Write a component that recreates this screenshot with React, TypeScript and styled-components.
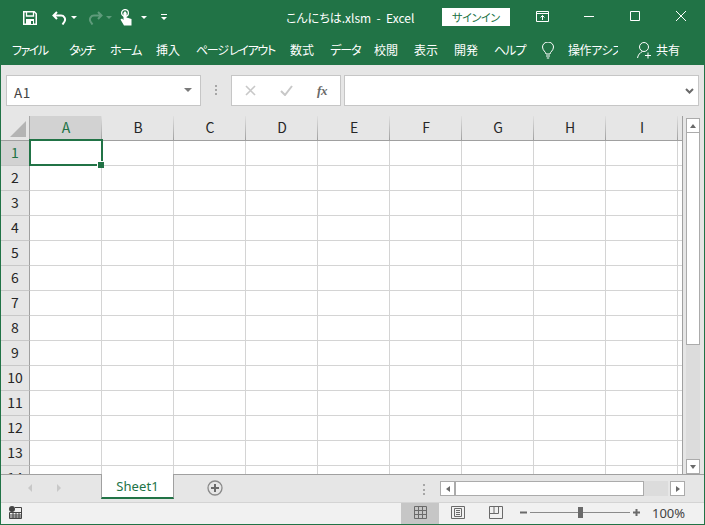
import React from "react";
import styled, { createGlobalStyle } from "styled-components";

const GREEN = "#217346";
const UI = `"Noto Sans CJK JP", "Noto Sans", sans-serif`;

const Global = createGlobalStyle`
  html, body { margin: 0; padding: 0; width: 705px; height: 525px; overflow: hidden; background: #e6e6e6; }
  * { box-sizing: border-box; }
`;

const Window = styled.div`
  width: 705px;
  height: 525px;
  display: flex;
  flex-direction: column;
  background: #e6e6e6;
  border: solid ${GREEN};
  border-width: 0 1px 1px 1px;
  font-family: ${UI};
  overflow: hidden;
`;

const TitleBar = styled.header`
  height: 35px;
  flex: none;
  margin: 0 -1px;
  background: ${GREEN};
  display: flex;
  align-items: center;
  color: #fff;
`;
const Quick = styled.div`
  display: flex;
  align-items: center;
  padding-left: 23px;
`;
const QuickIcon = styled.svg<{ $after: number }>`
  display: block;
  flex: none;
  margin-right: ${p => p.$after}px;
`;
const TitleText = styled.div`
  margin-left: 119px;
  width: 156px;
  font-size: 12px;
  font-feature-settings: "palt";
  white-space: pre;
  color: #fff;
  line-height: 35px;
`;
const SignIn = styled.button`
  width: 68px;
  height: 18px;
  margin: 0 0 1px 0;
  padding: 0;
  border: 0;
  background: #fff;
  color: ${GREEN};
  font-family: ${UI};
  font-size: 11px;
  line-height: 18px;
  font-feature-settings: "palt";
  letter-spacing: -0.3px;
`;
const WinControls = styled.div`
  display: flex;
  align-items: center;
  margin-left: 26px;
`;
const WinIcon = styled.svg<{ $after: number }>`
  display: block;
  flex: none;
  margin-right: ${p => p.$after}px;
  margin-bottom: 3px;
`;

const Ribbon = styled.nav`
  height: 30px;
  flex: none;
  margin: 0 -1px;
  background: ${GREEN};
  display: flex;
  align-items: center;
  padding: 0 0 0 12px;
  color: #fff;
`;
const Tab = styled.span<{ $w: number; $ls?: number; $after?: number }>`
  flex: none;
  width: ${p => p.$w}px;
  margin-right: ${p => p.$after ?? 0}px;
  font-size: 12px;
  line-height: 30px;
  font-feature-settings: "palt";
  letter-spacing: ${p => p.$ls ?? 0}px;
  white-space: nowrap;
  overflow: hidden;
  color: #fff;
`;
const TabIcon = styled.svg<{ $after: number }>`
  display: block;
  flex: none;
  margin-right: ${p => p.$after}px;
`;

const FormulaBar = styled.div`
  height: 51px;
  flex: none;
  display: flex;
  padding: 10px 5px 10px 5px;
  align-items: stretch;
`;
const NameBox = styled.div`
  width: 195px;
  flex: none;
  background: #fff;
  border: 1px solid #c6c6c6;
  display: flex;
  align-items: center;
  justify-content: space-between;
  padding: 3px 8px 0 7px;
  font-size: 13.500px;
  color: #444;
  letter-spacing: 0.5px;
`;
const Caret = styled.i`
  display: block;
  width: 0;
  height: 0;
  border: 4px solid transparent;
  border-top: 4px solid #7a7a7a;
  border-bottom: 0;
  margin-top: -4px;
`;
const Grip = styled.div`
  width: 30px;
  flex: none;
  display: flex;
  flex-direction: column;
  align-items: center;
  justify-content: center;
  gap: 2px;
  padding-bottom: 1px;
`;
const GripDot = styled.i`
  display: block;
  width: 2px;
  height: 2px;
  background: #a6a6a6;
`;
const FxBox = styled.div`
  width: 110px;
  flex: none;
  background: #fff;
  border: 1px solid #c6c6c6;
  display: flex;
  align-items: center;
  padding-left: 13px;
`;
const FxIcon = styled.svg<{ $after: number }>`
  display: block;
  flex: none;
  margin-right: ${p => p.$after}px;
`;
const FxLabel = styled.span`
  font-family: "Liberation Serif", serif;
  font-style: italic;
  font-weight: bold;
  font-size: 13px;
  color: #6a6a6a;
  letter-spacing: -0.3px;
`;
const FormulaInput = styled.div`
  width: 355px;
  flex: none;
  margin-left: 3px;
  background: #fff;
  border: 1px solid #c6c6c6;
  display: flex;
  align-items: center;
  justify-content: flex-end;
  padding-right: 4px;
`;

const SheetArea = styled.div`
  height: 358px;
  flex: none;
  display: flex;
  position: relative;
`;
const Grid = styled.div`
  width: 682px;
  flex: none;
  height: 358px;
  overflow: hidden;
  position: relative;
  display: grid;
  grid-template-columns: 29px repeat(9, 72px) 4px;
  grid-auto-rows: 25px;
  align-content: start;
  border-right: 1px solid #a0a0a0;
`;
const Corner = styled.div`
  background: #e6e6e6;
  border-right: 1px solid #a8a8a8;
  border-bottom: 1px solid #a0a0a0;
  position: relative;
  &::after {
    content: "";
    position: absolute;
    right: 3px;
    bottom: 3px;
    border-style: solid;
    border-width: 0 0 16px 16px;
    border-color: transparent transparent #b4b4b4 transparent;
  }
`;
const ColHead = styled.div<{ $on?: boolean }>`
  background: ${p => (p.$on ? "#d2d2d2" : "#e6e6e6")};
  color: ${p => (p.$on ? GREEN : "#262626")};
  border-bottom: 1px solid #a0a0a0;
  font-size: 14px;
  line-height: 23px;
  text-align: center;
  position: relative;
  &::after {
    content: "";
    position: absolute;
    top: 0;
    right: 0;
    bottom: 0;
    width: 1px;
    background: linear-gradient(to bottom, #e0e0e0, #a0a0a0);
  }
`;
const RowHead = styled.div<{ $on?: boolean }>`
  background: ${p => (p.$on ? "#d2d2d2" : "#e6e6e6")};
  color: ${p => (p.$on ? GREEN : "#262626")};
  border-right: 1px solid #a0a0a0;
  border-bottom: 1px solid #c8c8c8;
  font-size: 14px;
  line-height: 22px;
  text-align: center;
`;
const Cell = styled.div`
  background: #fff;
  border-right: 1px solid #d4d4d4;
  border-bottom: 1px solid #d4d4d4;
`;
const Tail = styled.div`
  background: #fff;
  border-bottom: 1px solid #d4d4d4;
`;
const TailHead = styled.div`
  background: #e6e6e6;
  border-bottom: 1px solid #a0a0a0;
`;
const Selection = styled.div`
  position: absolute;
  left: 28px;
  top: 23px;
  width: 74px;
  height: 27px;
  border: 2px solid ${GREEN};
  &::after {
    content: "";
    position: absolute;
    right: -3px;
    bottom: -4px;
    width: 6px;
    height: 6px;
    background: ${GREEN};
    border: 1px solid #fff;
    border-width: 1px 0 0 1px;
  }
`;
const VScroll = styled.div`
  position: absolute;
  left: 685px;
  top: 2px;
  width: 14px;
  height: 356px;
  display: flex;
  flex-direction: column;
  background: #dcdcdc;
`;
const ScrollButton = styled.div<{ $dir: "up" | "down" | "left" | "right" }>`
  flex: none;
  ${p => (p.$dir === "up" || p.$dir === "down" ? "height: 15px; width: 14px;" : "width: 15px; height: 15px;")}
  background: #fff;
  border: 1px solid #ababab;
  display: flex;
  align-items: center;
  justify-content: center;
  &::before {
    content: "";
    width: 0;
    height: 0;
    border: 3px solid transparent;
    ${p =>
      p.$dir === "up"
        ? "border-bottom: 4px solid #6a6a6a; border-top: 0;"
        : p.$dir === "down"
        ? "border-top: 4px solid #6a6a6a; border-bottom: 0;"
        : p.$dir === "left"
        ? "border-right: 4px solid #6a6a6a; border-left: 0;"
        : "border-left: 4px solid #6a6a6a; border-right: 0;"}
  }
`;
const VThumb = styled.div`
  height: 212px;
  flex: none;
  background: #fff;
  border: 1px solid #ababab;
  border-top: 0;
`;
const VTrack = styled.div`
  flex: 1;
`;

const TabBar = styled.div`
  height: 28px;
  flex: none;
  border-top: 1px solid #a0a0a0;
  display: flex;
`;
const NavArrow = styled.i<{ $dir: "l" | "r"; $left: number; $right: number }>`
  display: block;
  flex: none;
  width: 0;
  height: 0;
  margin: 9px ${p => p.$right}px 0 ${p => p.$left}px;
  align-self: flex-start;
  border: 4px solid transparent;
  ${p => (p.$dir === "l" ? "border-right: 4px solid #c8c8c8; border-left: 0;" : "border-left: 4px solid #c8c8c8; border-right: 0;")}
`;
const SheetTab = styled.div`
  width: 73px;
  height: 25px;
  margin: -1px 0 0 0;
  flex: none;
  background: #fff;
  border: solid #a0a0a0;
  border-width: 0 1px 0 1px;
  border-bottom: 2px solid ${GREEN};
  color: ${GREEN};
  font-family: "Noto Sans", sans-serif;
  font-size: 13px;
  letter-spacing: 0.1px;
  line-height: 25px;
  text-align: center;
`;
const AddIcon = styled.svg`
  display: block;
  flex: none;
  margin: 5px 0 0 33px;
`;
const HGrip = styled.div`
  margin: 9px 0 0 196px;
  flex: none;
  width: 10px;
  height: 11px;
  display: flex;
  flex-direction: column;
  align-items: center;
  justify-content: space-between;
`;
const HScroll = styled.div`
  flex: none;
  margin: 6px 0 0 11px;
  width: 245px;
  height: 15px;
  display: flex;
`;
const HThumb = styled.div`
  width: 189px;
  flex: none;
  background: #fff;
  border: 1px solid #ababab;
`;
const HTrack = styled.div`
  width: 24px;
  flex: none;
  background: #dcdcdc;
  margin-right: 2px;
`;

const StatusBar = styled.footer`
  height: 22px;
  flex: none;
  background: #f1f1f1;
  border-top: 1px solid #d4d4d4;
  display: flex;
  align-items: center;
  padding-left: 8px;
  color: #444;
`;
const StatusIcon = styled.svg<{ $lift?: boolean }>`
  display: block;
  flex: none;
  margin-bottom: ${p => (p.$lift ? 2 : 0)}px;
`;
const ViewButtons = styled.div`
  display: flex;
  margin-left: 379px;
  height: 21px;
`;
const ViewButton = styled.div<{ $on?: boolean }>`
  width: 38px;
  height: 21px;
  padding-bottom: 2px;
  display: flex;
  align-items: center;
  justify-content: center;
  background: ${p => (p.$on ? "#c6c6c6" : "transparent")};
`;
const Zoom = styled.div`
  display: flex;
  align-items: center;
  margin: 0 0 2px 5px;
`;
const ZoomGlyph = styled.svg`
  display: block;
  flex: none;
`;
const Slider = styled.div`
  width: 100px;
  height: 1px;
  background: #8a8a8a;
  margin: 0 3px;
  position: relative;
`;
const SliderThumb = styled.i`
  position: absolute;
  left: 48px;
  top: -5px;
  width: 5px;
  height: 11px;
  background: #6a6a6a;
`;
const Percent = styled.span`
  margin-left: 12px;
  font-family: "Noto Sans", sans-serif;
  font-size: 13px;
  line-height: 20px;
  color: #444;
`;

const tabs: [string, number, number][] = [
  ["ファイル", 57, -1.5],
  ["タッチ", 41, -2],
  ["ホーム", 46, -1],
  ["挿入", 40, 0],
  ["ページ レイアウト", 94, -1.300],
  ["数式", 40, 0],
  ["データ", 44, -1],
  ["校閲", 40, 0],
  ["表示", 40, 0],
  ["開発", 40, 0],
  ["ヘルプ", 48, -1],
];
const cols = ["A", "B", "C", "D", "E", "F", "G", "H", "I"];
const rows = Array.from({ length: 14 }, (_, i) => i + 1);

export default function App() {
  return (
    <Window>
      <Global />
      <TitleBar>
        <Quick>
          <QuickIcon $after={15} width="14" height="14" viewBox="0 0 14 14">
            <path d="M.75.750h10.500l2 2v10.500H.75z" fill="none" stroke="#fff" strokeWidth="1.500" />
            <path d="M3.500 1v4h7V1" fill="none" stroke="#fff" strokeWidth="1.300" />
            <path d="M3 8h8v6H3z" fill="#fff" />
            <path d="M8 10h2v3H8z" fill={GREEN} />
          </QuickIcon>
          <QuickIcon $after={4} width="15" height="14" viewBox="0 0 15 14">
            <path d="M5 1 1.500 4.500 5 8M2 4.500h7a4 4 0 0 1 3.500 6l-2 3" fill="none" stroke="#fff" strokeWidth="2" />
          </QuickIcon>
          <QuickIcon $after={11} width="6" height="4" viewBox="0 0 6 4">
            <path d="M0 0h6L3 3z" fill="#fff" />
          </QuickIcon>
          <QuickIcon $after={3} width="15" height="14" viewBox="0 0 15 14">
            <path d="M10 1l3.500 3.500L10 8M13 4.500H6a4 4 0 0 0-3.500 6l2 3" fill="none" stroke="#5f9b7b" strokeWidth="2" />
          </QuickIcon>
          <QuickIcon $after={8} width="6" height="4" viewBox="0 0 6 4">
            <path d="M0 0h6L3 3z" fill="#5f9b7b" />
          </QuickIcon>
          <QuickIcon $after={9} width="12" height="17" viewBox="0 0 12 17">
            <path d="M3.500 4V11L2 9.500 0.500 10.500 4 16.500h7.500V10L6.500 8.500V4z" fill="#fff" />
            <circle cx="5" cy="4" r="3.400" fill="none" stroke="#fff" strokeWidth="1.300" />
            <rect x="3.700" y="2.500" width="2.600" height="6" rx="1.300" fill="#fff" />
          </QuickIcon>
          <QuickIcon $after={14} width="6" height="4" viewBox="0 0 6 4">
            <path d="M0 0h6L3 3z" fill="#fff" />
          </QuickIcon>
          <QuickIcon $after={0} width="6" height="7" viewBox="0 0 6 7">
            <path d="M0 0h6v1H0zM0 3h6L3 6z" fill="#fff" />
          </QuickIcon>
        </Quick>
        <TitleText>こんにちは.xlsm  -  Excel</TitleText>
        <SignIn>サインイン</SignIn>
        <WinControls>
          <WinIcon $after={35} width="13" height="11" viewBox="0 0 13 11">
            <path d="M.5.500h12v10H.5zM1 2.500h11M6.500 9V4.500M4.500 6.500l2-2 2 2" fill="none" stroke="#fff" />
          </WinIcon>
          <WinIcon $after={36} width="10" height="11" viewBox="0 0 10 11">
            <path d="M0 5.500h10" stroke="#fff" fill="none" />
          </WinIcon>
          <WinIcon $after={36} width="10" height="10" viewBox="0 0 10 10">
            <path d="M.5.500h9v9h-9z" stroke="#fff" fill="none" />
          </WinIcon>
          <WinIcon $after={0} width="10" height="10" viewBox="0 0 10 10">
            <path d="M0 0l10 10M10 0L0 10" stroke="#fff" fill="none" />
          </WinIcon>
        </WinControls>
      </TitleBar>
      <Ribbon>
        {tabs.map(([t, w, ls]) => (
          <Tab key={t} $w={w} $ls={ls}>{t}</Tab>
        ))}
        <TabIcon $after={14} width="12" height="17" viewBox="0 0 12 17">
          <path d="M4 12c0-2-3.500-3.500-3.500-7a5.500 5 0 0 1 11 0c0 3.500-3.500 5-3.500 7zM4 14h4M4.800 16h2.400" fill="none" stroke="#fff" />
        </TabIcon>
        <Tab $w={50} $after={19} $ls={-0.400}>操作アシス</Tab>
        <TabIcon $after={4} width="15" height="17" viewBox="0 0 15 17">
          <circle cx="7" cy="5" r="4.500" fill="none" stroke="#fff" />
          <path d="M.5 16c.5-3 2.500-5.500 5-6.500M11 10.500v6M8 13.500h6" fill="none" stroke="#fff" />
        </TabIcon>
        <Tab $w={24}>共有</Tab>
      </Ribbon>
      <FormulaBar>
        <NameBox>A1<Caret /></NameBox>
        <Grip><GripDot /><GripDot /><GripDot /></Grip>
        <FxBox>
          <FxIcon $after={24} width="11" height="11" viewBox="0 0 11 11">
            <path d="M1 1l9 9M10 1l-9 9" stroke="#c8c8c8" strokeWidth="1.600" fill="none" />
          </FxIcon>
          <FxIcon $after={24} width="13" height="11" viewBox="0 0 13 11">
            <path d="M1 6l4 4 7-9" stroke="#c8c8c8" strokeWidth="2" fill="none" />
          </FxIcon>
          <FxLabel>fx</FxLabel>
        </FxBox>
        <FormulaInput>
          <FxIcon $after={0} width="9" height="6" viewBox="0 0 9 6">
            <path d="M1 1l3.500 3.500L8 1" stroke="#6a6a6a" strokeWidth="2" fill="none" />
          </FxIcon>
        </FormulaInput>
      </FormulaBar>
      <SheetArea>
        <Grid>
          <Corner />
          {cols.map((c, i) => (
            <ColHead key={c} $on={i === 0}>{c}</ColHead>
          ))}
          <TailHead />
          {rows.map(r => (
            <React.Fragment key={r}>
              <RowHead $on={r === 1}>{r}</RowHead>
              {cols.map(c => (
                <Cell key={c} />
              ))}
              <Tail />
            </React.Fragment>
          ))}
          <Selection />
        </Grid>
        <VScroll>
          <ScrollButton $dir="up" />
          <VThumb />
          <VTrack />
          <ScrollButton $dir="down" />
        </VScroll>
      </SheetArea>
      <TabBar>
        <NavArrow $dir="l" $left={27} $right={25} />
        <NavArrow $dir="r" $left={0} $right={40} />
        <SheetTab>Sheet1</SheetTab>
        <AddIcon width="16" height="16" viewBox="0 0 16 16">
          <circle cx="8" cy="8" r="7" fill="none" stroke="#8a8a8a" strokeWidth="1.300" />
          <path d="M8 4v8M4 8h8" stroke="#6a6a6a" strokeWidth="2" fill="none" />
        </AddIcon>
        <HGrip><GripDot /><GripDot /><GripDot /></HGrip>
        <HScroll>
          <ScrollButton $dir="left" />
          <HThumb />
          <HTrack />
          <ScrollButton $dir="right" />
        </HScroll>
      </TabBar>
      <StatusBar>
        <StatusIcon $lift width="13" height="13" viewBox="0 0 13 13">
          <circle cx="3" cy="3" r="3" fill="#444" />
          <path d="M6 1.500h6.500V12.500H.5V6.500h12M.5 9h12M.5 11h12M4 6.500V13M7 6.500V13M10 6.500V13" fill="none" stroke="#444" />
        </StatusIcon>
        <ViewButtons>
          <ViewButton $on>
            <StatusIcon width="13" height="13" viewBox="0 0 13 13">
              <path d="M.5.500h12v12H.5zM4.500.500v12M8.500.500v12M.5 4.500h12M.5 8.500h12" fill="none" stroke="#6a6a6a" />
            </StatusIcon>
          </ViewButton>
          <ViewButton>
            <StatusIcon width="14" height="13" viewBox="0 0 14 13">
              <path d="M.5.500h13v12H.5zM3.500 2.500h7v8h-7zM5 4.500h4M5 6.500h4M5 8.500h4" fill="none" stroke="#6a6a6a" />
            </StatusIcon>
          </ViewButton>
          <ViewButton>
            <StatusIcon width="14" height="13" viewBox="0 0 14 13">
              <path d="M.5.500h13v12H.5zM.5 7.500h9V.5M5 .5v7" fill="none" stroke="#6a6a6a" />
            </StatusIcon>
          </ViewButton>
        </ViewButtons>
        <Zoom>
          <ZoomGlyph width="7" height="7" viewBox="0 0 7 7">
            <path d="M0 2.500h7v2H0z" fill="#6a6a6a" />
          </ZoomGlyph>
          <Slider><SliderThumb /></Slider>
          <ZoomGlyph width="7" height="7" viewBox="0 0 7 7">
            <path d="M0 2.500h7v2H0zM2.500 0h2v7h-2z" fill="#6a6a6a" />
          </ZoomGlyph>
          <Percent>100%</Percent>
        </Zoom>
      </StatusBar>
    </Window>
  );
}
